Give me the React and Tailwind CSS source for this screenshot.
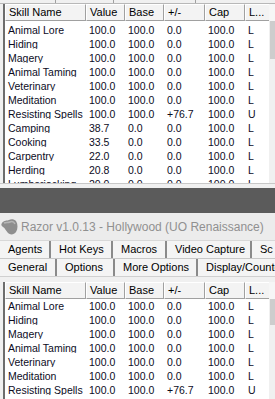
const cols = [
  { label: "Skill Name", w: "w-[81px]" },
  { label: "Value", w: "w-[39px]" },
  { label: "Base", w: "w-[39px]" },
  { label: "+/-", w: "w-[41px]" },
  { label: "Cap", w: "w-[40px]" },
  { label: "L...", w: "w-[25px]" },
];

const topRows = [
  ["Animal Lore", "100.0", "100.0", "0.0", "100.0", "L"],
  ["Hiding", "100.0", "100.0", "0.0", "100.0", "L"],
  ["Magery", "100.0", "100.0", "0.0", "100.0", "L"],
  ["Animal Taming", "100.0", "100.0", "0.0", "100.0", "L"],
  ["Veterinary", "100.0", "100.0", "0.0", "100.0", "L"],
  ["Meditation", "100.0", "100.0", "0.0", "100.0", "L"],
  ["Resisting Spells", "100.0", "100.0", "+76.7", "100.0", "U"],
  ["Camping", "38.7", "0.0", "0.0", "100.0", "L"],
  ["Cooking", "33.5", "0.0", "0.0", "100.0", "L"],
  ["Carpentry", "22.0", "0.0", "0.0", "100.0", "L"],
  ["Herding", "20.8", "0.0", "0.0", "100.0", "L"],
  ["Lumberjacking", "20.0", "0.0", "0.0", "100.0", "L"],
];

const bottomRows = topRows.slice(0, 7);

function Header() {
  return (
    <div className="flex h-[17px] shrink-0 text-[11px]">
      {cols.map((c) => (
        <div
          key={c.label}
          className={`${c.w} shrink-0 flex items-center pl-[3px] bg-[#f3f3f3] border-t border-l border-t-white border-l-white border-r border-b border-r-[#a0a0a0] border-b-[#a0a0a0] whitespace-nowrap overflow-hidden`}
        >
          {c.label}
        </div>
      ))}
    </div>
  );
}

function Row({ row }) {
  return (
    <div className="flex h-[14px] shrink-0 items-center">
      {row.map((v, i) => (
        <div key={i} className={`${cols[i].w} shrink-0 pl-[3px] whitespace-nowrap overflow-hidden text-[#0c0c1e]`}>
          {v}
        </div>
      ))}
    </div>
  );
}

function SkillList({ rows, height, gap, thumb }) {
  return (
    <div className={`flex ${height} overflow-hidden`}>
      <div className="w-[3px] shrink-0 bg-[#f0f0f0]" />
      <div className="w-[2px] shrink-0 bg-[#6d6d6d]" />
      <div className="flex flex-col w-[264px] shrink-0 bg-white overflow-hidden">
        <Header />
        <div className={gap} />
        {rows.map((r) => (
          <Row key={r[0]} row={r} />
        ))}
      </div>
      <div className="w-[17px] shrink-0 flex flex-col bg-[#f0f0f0]">
        <div className="h-[17px] bg-[#f6f6f6]" />
        <div className={`${thumb} mx-[1px] bg-[#cdcdcd]`} />
      </div>
    </div>
  );
}

function Tab({ label, w }) {
  return (
    <div className={`${w} shrink-0 h-full flex items-center pl-[8px] bg-[#f4f4f4] border-r-2 border-r-[#8a8a8a] whitespace-nowrap overflow-hidden`}>
      {label}
    </div>
  );
}

export default function App() {
  return (
    <div
      className="w-[275px] h-[399px] overflow-hidden bg-[#f0f0f0] text-[10.5px] leading-none text-black flex flex-col"
      style={{ fontFamily: '"Liberation Sans", Arial, sans-serif' }}
    >
      <div className="h-[4px] shrink-0 flex border-b border-[#b8b8b8]">
        <div className="w-[56px] border-r border-[#a0a0a0]" />
        <div className="w-[58px] border-r border-[#a0a0a0]" />
        <div className="w-[82px] border-r border-[#a0a0a0]" />
        <div className="flex-1" />
      </div>

      <SkillList rows={topRows} height="h-[179px]" gap="h-[2px] shrink-0" thumb="h-[38px]" />

      <div className="h-[5px] shrink-0 bg-[#f0f0f0] border-t border-[#c8c8c8]" />
      <div className="h-[25px] shrink-0 bg-[#5b5b5b]" />

      {/* title bar */}
      <div className="h-[27px] shrink-0 flex items-center bg-[#ececec] text-[12px] text-[#909090]">
        <svg width="18" height="20" viewBox="0 0 18 20" className="shrink-0 ml-[1px]">
          <path d="M1 6 C3 3 6 4 8 3 C10 2 13 2 15 4 C17 7 17 12 15 15 C13 18 9 18 7 16 C5 14 4 11 2 10 C0 9 0 7 1 6 Z" fill="#8e8e8e" />
          <path d="M3 6 C5 5 7 6 9 5 C11 4 13 5 14 7" stroke="#b5b5b5" strokeWidth="1.5" fill="none" />
        </svg>
        <span className="ml-[2px] whitespace-nowrap">Razor v1.0.13 - Hollywood (UO Renaissance)</span>
      </div>

      {/* tab rows */}
      <div className="h-[18px] shrink-0 flex border-t border-[#d8d8d8] text-[11px]">
        <Tab label="Agents" w="w-[51px]" />
        <Tab label="Hot Keys" w="w-[62px]" />
        <Tab label="Macros" w="w-[54px]" />
        <Tab label="Video Capture" w="w-[85px]" />
        <Tab label="Sc" w="w-[40px]" />
      </div>
      <div className="h-[19px] shrink-0 flex border-t border-[#c8c8c8] border-b border-b-[#d0d0d0] text-[11px]">
        <Tab label="General" w="w-[57px]" />
        <Tab label="Options" w="w-[58px]" />
        <Tab label="More Options" w="w-[83px]" />
        <Tab label="Display/Counters" w="w-[90px]" />
      </div>
      <div className="h-[5px] shrink-0 bg-[#f0f0f0]" />

      <SkillList rows={bottomRows} height="flex-1" gap="h-0" thumb="h-[26px]" />
    </div>
  );
}
